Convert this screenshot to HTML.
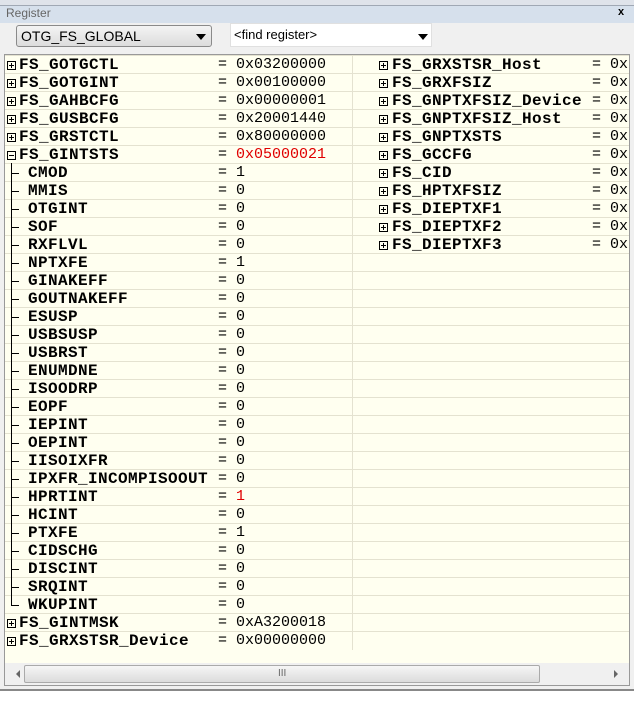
<!DOCTYPE html><html><head><style>
body{margin:0;width:634px;height:702px;overflow:hidden;background:#f0f0f0;font-family:"Liberation Sans",sans-serif;position:relative}
.a{position:absolute}
.row{position:absolute;height:18px;line-height:18px;white-space:nowrap}
.n{position:absolute;font:bold 16px "Liberation Mono",monospace;letter-spacing:0.4px;color:#000}
.v{position:absolute;font:15px "Liberation Mono",monospace;color:#000}
.r{color:#e00000}
.bx{position:absolute;width:9px;height:9px;border:1px solid #000;top:5px;box-sizing:border-box}
.bx:before{content:"";position:absolute;left:1px;right:1px;top:3px;height:1px;background:#000}
.p:after{content:"";position:absolute;top:1px;bottom:1px;left:3px;width:1px;background:#000}
.line{position:absolute;border-bottom:1px solid #e4e2d0;left:5px;width:624px}
</style></head><body>
<div class="a" style="left:0;top:0;width:634px;height:5px;background:#dfe3ea"></div>
<div class="a" style="left:0;top:5px;width:634px;height:17px;background:#d6e0ec;border-top:1px solid #a0a8b4"></div>
<div class="a" style="left:6px;top:6px;font-size:12px;color:#666">Register</div>
<div class="a" style="left:618px;top:6px;font:bold 11px 'Liberation Sans';color:#000">x</div>
<div class="a" style="left:16px;top:25px;width:196px;height:22px;border:1px solid #8a8a8a;border-radius:3px;background:linear-gradient(#f4f4f4,#dcdcdc);box-sizing:border-box"></div>
<div class="a" style="left:21px;top:28px;font-size:14px;color:#000">OTG_FS_GLOBAL</div>
<div class="a" style="left:196px;top:34px;width:0;height:0;border:5px solid transparent;border-top:6px solid #000"></div>
<div class="a" style="left:230px;top:23px;width:202px;height:24px;background:#fff;border:1px solid #e0e0e0;box-sizing:border-box"></div>
<div class="a" style="left:234px;top:27px;font-size:13px;color:#000">&lt;find register&gt;</div>
<div class="a" style="left:418px;top:34px;width:0;height:0;border:5px solid transparent;border-top:6px solid #000"></div>
<div class="a" style="left:4px;top:54px;width:626px;height:632px;background:#fffff0;border:1px solid #999;box-sizing:border-box"></div>
<div class="a" style="left:352px;top:55px;width:1px;height:595px;background:#e4e2d0"></div>
<div id="c"></div>
<div class="a" style="left:5px;top:663px;width:624px;height:22px;background:#f0f0f0"></div>
<div class="a" style="left:24px;top:665px;width:516px;height:18px;border:1px solid #aaa;border-radius:2px;background:linear-gradient(#f6f6f6,#dcdcdc);box-sizing:border-box"></div>
<div class="a" style="left:278px;top:668px;font-size:10px;color:#666">III</div>
<div class="a" style="left:12px;top:670px;border:4px solid transparent;border-right:4px solid #666;width:0;height:0"></div>
<div class="a" style="left:614px;top:670px;border:4px solid transparent;border-left:4px solid #666;width:0;height:0"></div>
<div class="a" style="left:0;top:689px;width:634px;height:13px;background:#fff;border-top:2px solid #888"></div>
<script>
var L=[["+","FS_GOTGCTL","0x03200000"],["+","FS_GOTGINT","0x00100000"],["+","FS_GAHBCFG","0x00000001"],["+","FS_GUSBCFG","0x20001440"],["+","FS_GRSTCTL","0x80000000"],["-","FS_GINTSTS","0x05000021",1]];
"CMOD 1,MMIS 0,OTGINT 0,SOF 0,RXFLVL 0,NPTXFE 1,GINAKEFF 0,GOUTNAKEFF 0,ESUSP 0,USBSUSP 0,USBRST 0,ENUMDNE 0,ISOODRP 0,EOPF 0,IEPINT 0,OEPINT 0,IISOIXFR 0,IPXFR_INCOMPISOOUT 0,HPRTINT 1,HCINT 0,PTXFE 1,CIDSCHG 0,DISCINT 0,SRQINT 0,WKUPINT 0".split(",").forEach(function(s,i,a){var p=s.split(" ");L.push(["c",p[0],p[1],p[0]=="HPRTINT",i==a.length-1]);});
L.push(["+","FS_GINTMSK","0xA3200018"],["+","FS_GRXSTSR_Device","0x00000000"]);
var R=["FS_GRXSTSR_Host","FS_GRXFSIZ","FS_GNPTXFSIZ_Device","FS_GNPTXFSIZ_Host","FS_GNPTXSTS","FS_GCCFG","FS_CID","FS_HPTXFSIZ","FS_DIEPTXF1","FS_DIEPTXF2","FS_DIEPTXF3"];
var h="";
for(var i=0;i<33;i++)h+='<div class="line" style="top:'+(55+i*18)+'px"></div>';
L.forEach(function(e,i){var t=56+i*18;h+='<div class="row" style="top:'+t+'px;left:0;width:352px">';
if(e[0]=="c"){h+='<div class="a" style="left:11px;top:-1px;width:1px;height:'+(e[4]?10:18)+'px;background:#000"></div><div class="a" style="left:11px;top:9px;width:8px;height:1px;background:#000"></div><div class="n" style="left:28px">'+e[1]+'</div>';}
else{h+='<div class="bx '+(e[0]=="+"?"p":"")+'" style="left:7px"></div><div class="n" style="left:19px">'+e[1]+'</div>';}
h+='<div class="v" style="left:218px">=</div><div class="v'+(e[3]?" r":"")+'" style="left:236px">'+e[2]+'</div></div>';});
R.forEach(function(n,i){var t=56+i*18;h+='<div class="row" style="top:'+t+'px;left:0"><div class="bx p" style="left:379px"></div><div class="n" style="left:392px">'+n+'</div><div class="v" style="left:592px">=</div><div class="v" style="left:610px">0x</div></div>';});
document.getElementById("c").innerHTML=h;
</script>
</body></html>
